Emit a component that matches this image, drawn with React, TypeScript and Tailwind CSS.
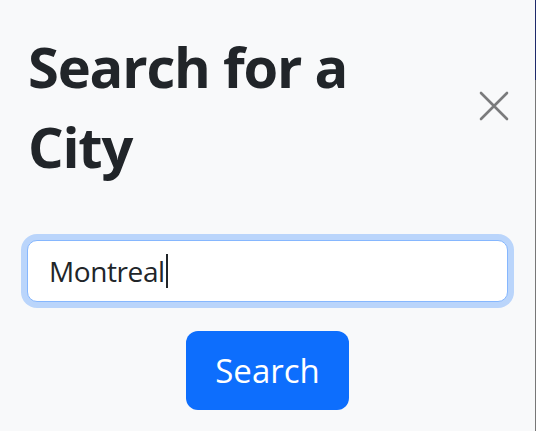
import React from "react";

export default function App() {
  return (
    <div className="flex h-[431px] w-[536px] bg-[#f8f9fa] text-[#212529]" style={{ fontFamily: '"Open Sans", "Noto Sans", sans-serif' }}>
      <div className="flex flex-1 flex-col">
        <div className="flex items-center justify-between pl-[28px] pr-[21px] pt-[26px]">
          <h1 className="text-[56px] font-bold leading-[80px] tracking-[-1.2px]">Search for a<br />City</h1>
          <button className="flex h-[40px] w-[40px] items-center justify-center" aria-label="Close">
            <svg width="30" height="30" viewBox="0 0 30 30" fill="none" stroke="#7a7b7c" strokeWidth="2.6" strokeLinecap="round">
              <path d="M2 2 L28 28 M28 2 L2 28" />
            </svg>
          </button>
        </div>
        <div className="px-[21px] pt-[48px]">
          <div className="rounded-[16px] bg-[#bad5fb] p-[6px]">
            <div className="flex h-[62px] items-center rounded-[10px] border border-[#86b7fe] bg-white px-[21px] text-[28px]">
              <span className="tracking-[-0.4px]">Montreal</span>
              <span className="ml-[1px] h-[34px] w-[2px] bg-[#212529]" />
            </div>
          </div>
        </div>
        <div className="flex justify-center pt-[23px]">
          <button className="h-[79px] w-[163px] rounded-[12px] bg-[#0d6efd] text-[33px] text-white">Search</button>
        </div>
      </div>
      <div className="flex w-[1px] flex-col">
        <div className="h-[80px] bg-[#1f2a6b]" />
        <div className="flex-1 bg-[#777]" />
      </div>
    </div>
  );
}
